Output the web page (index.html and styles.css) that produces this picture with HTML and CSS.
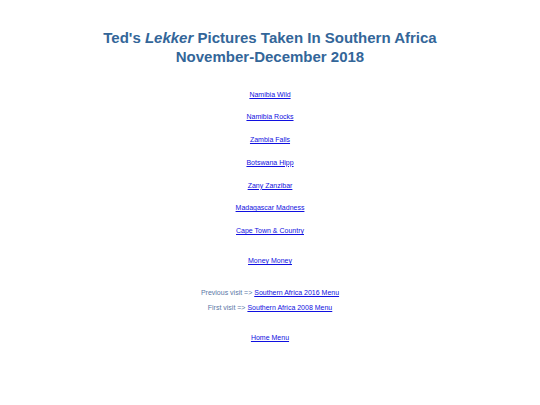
FILE: index.html
```html
<!DOCTYPE html>
<html>
<head>
<meta charset="utf-8">
<link rel="stylesheet" href="styles.css">
</head>
<body>
<h1 class="title">Ted's <em>Lekker</em> Pictures Taken In Southern Africa<br>November-December 2018</h1>
<div class="menu">
  <p class="item"><a href="#">Namibia Wild</a></p>
  <p class="item"><a href="#">Namibia Rocks</a></p>
  <p class="item"><a href="#">Zambia Falls</a></p>
  <p class="item"><a href="#">Botswana Hipp</a></p>
  <p class="item"><a href="#">Zany Zanzibar</a></p>
  <p class="item"><a href="#">Madagascar Madness</a></p>
  <p class="item"><a href="#">Cape Town &amp; Country</a></p>
  <p class="item gap"><a href="#">Money Money</a></p>
  <p class="item gap2">Previous visit =&gt; <a href="#">Southern Africa 2016 Menu</a></p>
  <p class="item tight">First visit =&gt; <a href="#">Southern Africa 2008 Menu</a></p>
  <p class="item gap"><a href="#">Home Menu</a></p>
</div>
</body>
</html>
```
FILE: styles.css
```css
html, body {
  margin: 0;
  padding: 0;
  background: #ffffff;
}
body {
  font-family: "Liberation Sans", Arial, sans-serif;
  color: #336699;
}
.title {
  margin: 27.5px 0 0 0;
  font-size: 15px;
  line-height: 19px;
  font-weight: bold;
  text-align: center;
  color: #336699;
}
.title em {
  font-style: italic;
}
.menu {
  margin-top: 25px;
  text-align: center;
  font-size: 7px;
  line-height: 8px;
}
.item {
  margin: 0 0 14.8px 0;
  color: #5a77a6;
}
.item a {
  color: #1010e0;
}
.gap {
  margin-top: 22px;
}
.gap2 {
  margin-top: 24px;
}
.tight {
  margin-top: -7.8px;
}
```
